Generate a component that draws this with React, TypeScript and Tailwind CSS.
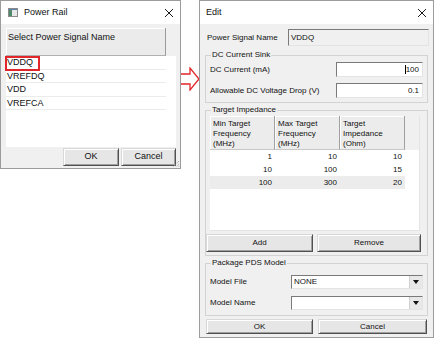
import React from "react";

const sunken =
  "border border-t-[#7a7a7a] border-l-[#7a7a7a] border-r-[#e3e3e3] border-b-[#e3e3e3]";
const raised =
  "border border-t-[#d8d8d8] border-l-[#d8d8d8] border-r-[#505050] border-b-[#505050] shadow-[inset_1px_1px_0_#ffffff,inset_-1px_-1px_0_#a0a0a0] bg-[#e6e6e6]";

function WinButton({ children, className }: { children: React.ReactNode; className: string }) {
  return <div className={`flex items-center justify-center ${raised} ${className}`}>{children}</div>;
}

function CloseX() {
  return (
    <svg width="10" height="10" viewBox="0 0 10 10" className="shrink-0">
      <path d="M1 1 L9 9 M9 1 L1 9" stroke="#1a1a1a" strokeWidth="1" />
    </svg>
  );
}

function AppIcon() {
  return (
    <svg width="10" height="9" viewBox="0 0 10 9" className="shrink-0">
      <rect x="0.5" y="0.5" width="9" height="8" fill="#e8e8e8" stroke="#8a8a8a" />
      <rect x="1" y="2" width="3" height="6" fill="#4f8a6a" />
      <rect x="1" y="1" width="8" height="1" fill="#5b7fa8" />
    </svg>
  );
}

function Combo({ value }: { value: string }) {
  return (
    <div className={`ml-auto mr-[4px] w-[132px] h-[14px] bg-white flex items-center ${sunken}`}>
      <span className="pl-[2px] flex-1 text-[8px]">{value}</span>
      <div className="w-[13px] h-full flex items-center justify-center bg-[#e8e8e8] border-l border-[#d0d0d0]">
        <svg width="6" height="4" viewBox="0 0 6 4">
          <path d="M0 0 L6 0 L3 4 Z" fill="#111" />
        </svg>
      </div>
    </div>
  );
}

export default function App() {
  const signals = ["VDDQ", "VREFDQ", "VDD", "VREFCA"];
  const rows = [
    ["1", "10", "10"],
    ["10", "100", "15"],
    ["100", "300", "20"],
  ];
  const headers = [
    ["Min Target", "Frequency", "(MHz)"],
    ["Max Target", "Frequency", "(MHz)"],
    ["Target", "Impedance", "(Ohm)"],
  ];

  return (
    <div className="w-[434px] h-[342px] bg-white flex items-start font-['Liberation_Sans',Arial,sans-serif] text-[#111]">
      {/* Power Rail dialog */}
      <div className="relative w-[181px] h-[169px] shrink-0 border border-[#9c9c9c] bg-[#f0f0f0] flex flex-col">
        <div className="h-[23px] bg-white flex items-center pl-[7px] pr-[6px]">
          <AppIcon />
          <span className="ml-[6px] text-[9px]">Power Rail</span>
          <div className="ml-auto">
            <CloseX />
          </div>
        </div>
        <div className="relative ml-[5px] mt-[4px] w-[170px] h-[119px] bg-white flex flex-col">
          <div className="flex h-[28px] shrink-0 bg-[#f0f0f0]">
            <div className="w-[160px] h-full bg-[#ebebeb] border-r border-b border-r-[#9a9a9a] border-b-[#b0b0b0] shadow-[inset_1px_1px_0_#ffffff] text-[9px] leading-[11px] pl-[2px] pt-[4px]">
              Select Power Signal Name
            </div>
          </div>
          {signals.map((s) => (
            <div key={s} className="w-[160px] h-[13.5px] border-b border-[#ececec] text-[9px] leading-[12px] pl-[1px]">
              {s}
            </div>
          ))}
          <div className="absolute left-[-1px] top-[28px] w-[35px] h-[15px] border-[2px] border-[#e0262b]" />
        </div>
        <div className="flex mt-[1px] ml-[62px] gap-[2px] text-[9px]">
          <WinButton className="w-[56px] h-[18px]">OK</WinButton>
          <WinButton className="w-[55px] h-[18px]">Cancel</WinButton>
        </div>
        <svg width="8" height="8" viewBox="0 0 8 8" className="absolute right-[0px] bottom-[0px]">
          <path d="M7 1 L1 7 M7 4 L4 7 M7 6.5 L6.5 7" stroke="#9a9a9a" strokeWidth="1" strokeDasharray="1 1" />
        </svg>
      </div>

      {/* arrow */}
      <svg width="22" height="24" viewBox="0 0 22 24" className="shrink-0 mt-[67px] -ml-[3px] -mr-[1px]">
        <path d="M1 7 L12 7 L12 1 L21 12 L12 23 L12 17 L1 17 Z" fill="#ffffff" stroke="#e0262b" strokeWidth="1.3" />
      </svg>

      {/* Edit dialog */}
      <div className="w-[235px] h-[338px] shrink-0 border border-[#9c9c9c] bg-[#f0f0f0] flex flex-col text-[8px]">
        <div className="h-[23px] bg-white flex items-center pl-[6px] pr-[6px]">
          <span className="text-[9px]">Edit</span>
          <div className="ml-auto">
            <CloseX />
          </div>
        </div>

        <div className="flex items-center mt-[5px] h-[17px]">
          <span className="ml-[7px] w-[81px]">Power Signal Name</span>
          <div className={`w-[141px] h-[17px] bg-[#f0f0f0] flex items-center pl-[2px] ${sunken}`}>VDDQ</div>
        </div>

        <fieldset className="mt-[4px] ml-[5px] w-[223px] border border-[#d3d3d3] pb-[4px]">
          <legend className="ml-[5px] px-[1px] leading-[10px]">DC Current Sink</legend>
          <div className="flex items-center h-[15px] mt-[2px] pl-[4px]">
            <span>DC Current (mA)</span>
            <div className={`ml-auto mr-[4px] w-[87px] h-[15px] bg-white flex items-center justify-end pr-[3px] ${sunken}`}>
              <span className="w-px h-[9px] bg-black" />
              100
            </div>
          </div>
          <div className="flex items-center h-[15px] mt-[6px] pl-[4px]">
            <span>Allowable DC Voltage Drop (V)</span>
            <div className={`ml-auto mr-[4px] w-[87px] h-[15px] bg-white flex items-center justify-end pr-[3px] ${sunken}`}>
              0.1
            </div>
          </div>
        </fieldset>

        <fieldset className="mt-[2px] ml-[5px] w-[223px] border border-[#d3d3d3] pb-[3px]">
          <legend className="ml-[5px] px-[1px] leading-[10px]">Target Impedance</legend>
          <div className="mt-[1px] ml-[4px] w-[210px] h-[115px] bg-white flex flex-col border-r border-b border-[#e4e4e4]">
            <div className="flex h-[34px] bg-[#f0f0f0]">
              {headers.map((h, i) => (
                <div
                  key={i}
                  className="w-[65px] h-full bg-[#ececec] border-r border-b border-r-[#a0a0a0] border-b-[#c8c8c8] shadow-[inset_1px_1px_0_#ffffff] pl-[3px] pt-[3px] leading-[10px]"
                >
                  {h.map((l) => (
                    <div key={l}>{l}</div>
                  ))}
                </div>
              ))}
            </div>
            {rows.map((r, i) => (
              <div key={i} className={`flex h-[13px] w-[195px] leading-[13px] ${i === 2 ? "bg-[#ececec]" : ""}`}>
                {r.map((c, j) => (
                  <div key={j} className="w-[65px] text-right pr-[3px]">
                    {c}
                  </div>
                ))}
              </div>
            ))}
          </div>
          <div className="flex mt-[3px] h-[18px]">
            <WinButton className="ml-[0px] w-[107px] h-[18px]">Add</WinButton>
            <WinButton className="ml-[4px] w-[104px] h-[18px]">Remove</WinButton>
          </div>
        </fieldset>

        <fieldset className="mt-[2px] ml-[5px] w-[223px] border border-[#d3d3d3] pb-[5px]">
          <legend className="ml-[5px] px-[1px] leading-[10px]">Package PDS Model</legend>
          <div className="flex items-center h-[14px] mt-[7px] pl-[4px]">
            <span>Model File</span>
            <Combo value="NONE" />
          </div>
          <div className="flex items-center h-[14px] mt-[7px] pl-[4px]">
            <span>Model Name</span>
            <Combo value="" />
          </div>
        </fieldset>

        <div className="flex mt-[3px] h-[15px]">
          <WinButton className="ml-[6px] w-[107px] h-[15px]">OK</WinButton>
          <WinButton className="ml-[5px] w-[109px] h-[15px]">Cancel</WinButton>
        </div>
      </div>
    </div>
  );
}
